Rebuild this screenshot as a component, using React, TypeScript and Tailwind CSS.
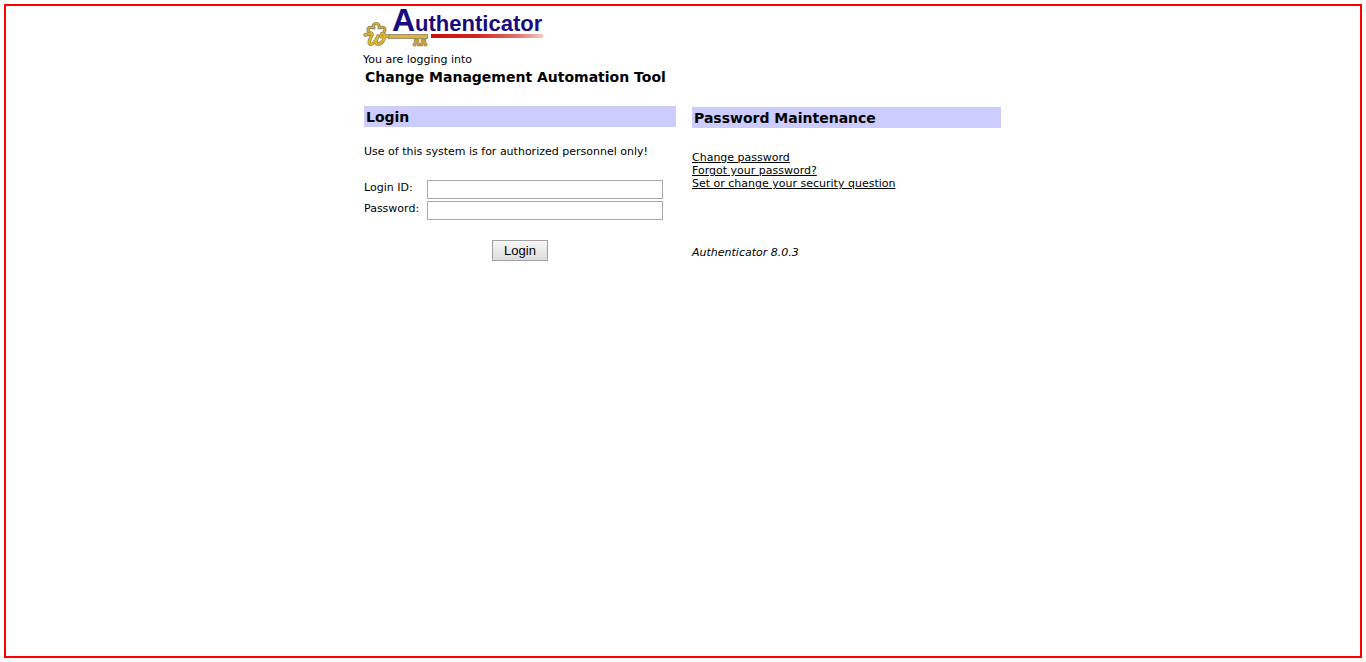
import type { ReactNode } from "react";

const crownPath = "M6 24C3 20 7 18 11 20C8 14 18 14 16 20C20 18 24 20 21 24";
const letterPath = "M2 27L6 26C9 24 10 26 8 29C5 35 6 37 9 36C12 35 14 30 15 28C12 34 13 37 16 36C20 35 23 29 21 26C19 24 16 28 19 29C21 30 23 28 25 28";

function Logo() {
  return (
    <svg width="182" height="40" viewBox="0 0 182 40" role="img" aria-label="Authenticator" className="block overflow-visible">
      <defs>
        <linearGradient id="bar" x1="0" x2="1" y1="0" y2="0">
          <stop offset="0" stopColor="#cc0f0a" />
          <stop offset="0.4" stopColor="#d0261e" />
          <stop offset="0.75" stopColor="#df6b62" />
          <stop offset="1" stopColor="#f6c9c5" />
        </linearGradient>
      </defs>
      <text x="29" y="23" fill="#1a0a80" fontFamily="'Liberation Sans', Arial, sans-serif" fontWeight="700">
        <tspan fontSize="32">A</tspan>
        <tspan fontSize="22">uthenticator</tspan>
      </text>
      <rect x="68" y="26" width="112" height="4" fill="url(#bar)" />
      <path d="M25 26H65V31H25Z" fill="#9c9178" />
      <path d="M25 27H64V30H25Z" fill="#e0b52b" />
      <g fill="none" strokeLinecap="round" strokeLinejoin="round">
        <path d={crownPath} stroke="#877a55" strokeWidth="3" />
        <path d={crownPath} stroke="#dfb62c" strokeWidth="1.3" />
        <path d={letterPath} stroke="#877a55" strokeWidth="3.4" />
        <path d={letterPath} stroke="#dfb62c" strokeWidth="2.2" />
      </g>
      <g fill="#c9a338" stroke="#8d7d4c" strokeWidth="0.5">
        <path d="M51 31H56V34H55V35H57V38H54V36H53V38H50V35H52V34H51Z" />
        <path d="M58 31H63V34H62V35H64V38H61V36H60V38H57V35H59V34H58Z" />
      </g>
    </svg>
  );
}

function SectionTitle({ children }: { children: ReactNode }) {
  return (
    <h2 className="bg-[#ccccff] px-0.5 pt-px text-[14px] leading-5 font-bold">{children}</h2>
  );
}

const inputClass = "h-[19px] w-[236px] border border-[#a9a9a9] bg-white px-0.5 outline-none";
const links = ["Change password", "Forgot your password?", "Set or change your security question"];

export default function App() {
  return (
    <div className="flex min-h-screen bg-white p-1 font-['Verdana','DejaVu_Sans',sans-serif] text-[11px] leading-[13px] text-black">
      <main className="flex-1 border-2 border-[#ff0000]">
        <div className="mx-auto max-w-[640px] pt-0.5">
          <header>
            <Logo />
            <p className="mt-[5px]">You are logging into</p>
            <h1 className="px-0.5 text-[14px] leading-[22px] font-bold">Change Management Automation Tool</h1>
          </header>
          <div className="mt-[18px] flex flex-wrap gap-4 px-px">
            <section className="w-[312px]">
              <SectionTitle>Login</SectionTitle>
              <p className="mt-[18px]">Use of this system is for authorized personnel only!</p>
              <form className="mt-[22px]" onSubmit={(e) => e.preventDefault()}>
                <div className="grid grid-cols-[63px_236px] gap-y-0.5">
                  <label htmlFor="login-id" className="pt-px">Login ID:</label>
                  <input id="login-id" type="text" className={inputClass} />
                  <label htmlFor="password" className="pt-px">Password:</label>
                  <input id="password" type="password" className={inputClass} />
                </div>
                <div className="mt-5 flex justify-center">
                  <button
                    type="submit"
                    className="h-[21px] w-14 border border-[#a0a0a0] bg-linear-to-b from-[#f6f6f6] to-[#dddddd] font-['Liberation_Sans',Arial,sans-serif] text-[13px] leading-[19px]"
                  >
                    Login
                  </button>
                </div>
              </form>
            </section>
            <section className="w-[309px] pt-px">
              <SectionTitle>Password Maintenance</SectionTitle>
              <nav className="mt-[23px] flex flex-col items-start">
                {links.map((text) => (
                  <a key={text} href="#" className="underline">
                    {text}
                  </a>
                ))}
              </nav>
              <p className="mt-14 italic">Authenticator 8.0.3</p>
            </section>
          </div>
        </div>
      </main>
    </div>
  );
}
